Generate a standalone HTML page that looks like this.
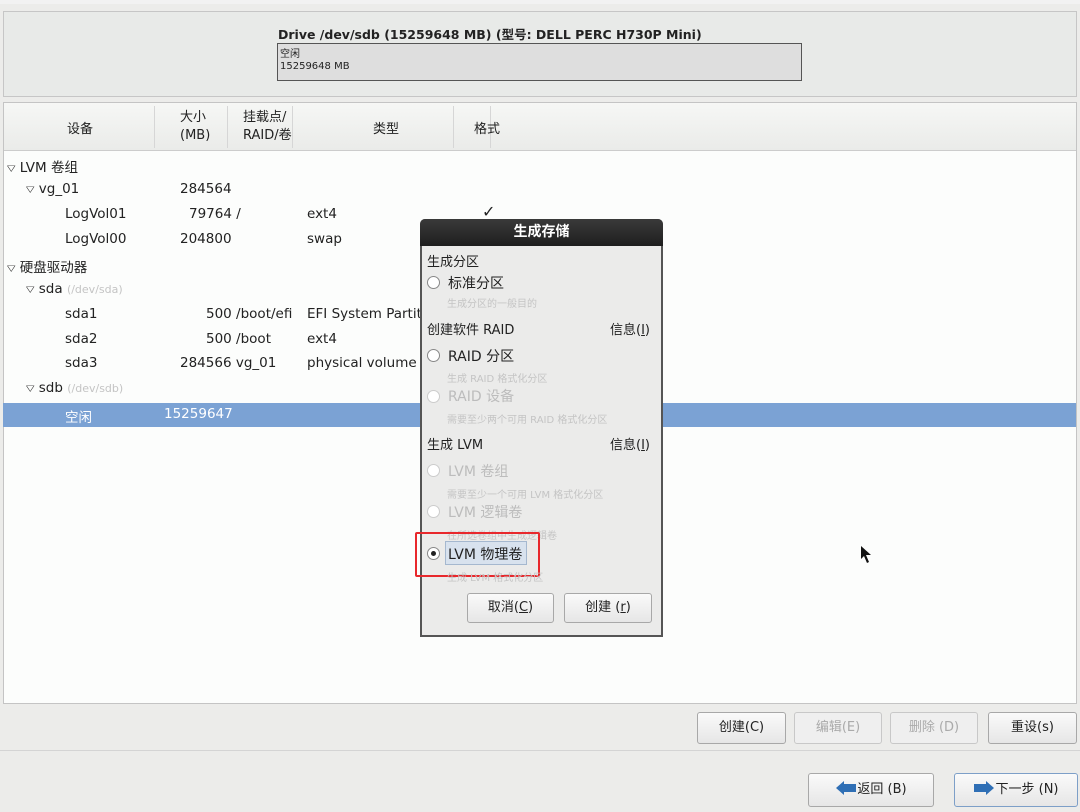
<!DOCTYPE html>
<html><head><meta charset="utf-8"><style>
*{margin:0;padding:0;box-sizing:border-box}
body{width:1080px;height:812px;background:#ececea;font-family:"DejaVu Sans","Noto Sans CJK SC",sans-serif;color:#222;position:relative;overflow:hidden;font-size:14px}
.a{position:absolute;white-space:nowrap}
.btn{position:absolute;border:1px solid #a8a8a8;border-radius:3px;background:linear-gradient(#fafafa,#e6e6e6);text-align:center;font-size:13px;line-height:30px;height:32px}
.dis{color:#aaa;border-color:#c8c8c8;background:#efefef}
.gr{color:#bcbcbc}
.rad{position:absolute;width:13px;height:13px;border:1px solid #888;border-radius:50%;background:#fff}
.rad.d{border-color:#ccc}
.sm{font-size:11px;color:#c4c4c4}
.t{font-size:11px;display:inline-block;transform:scaleY(0.75)}
</style></head><body>
<div class="a" style="left:0;top:0;width:1080px;height:4px;background:#f2f2f2"></div>
<div class="a" style="left:3px;top:11px;width:1074px;height:86px;border:1px solid #c6c6c6;background:#e8eae8"></div>
<div class="a" style="left:278px;top:24px;font-weight:bold;font-size:12.5px">Drive /dev/sdb (15259648 MB) (型号: DELL PERC H730P Mini)</div>
<div class="a" style="left:277px;top:43px;width:525px;height:38px;border:1px solid #555;background:#dedede;font-size:10px;line-height:12px;padding:5px 0 0 2px">空闲<br>15259648 MB</div>

<div class="a" style="left:3px;top:102px;width:1074px;height:602px;border:1px solid #c4c4c4;background:#fcfdfc"></div>
<div class="a" style="left:4px;top:103px;width:1072px;height:48px;background:linear-gradient(#f6f7f5,#eaebe9);border-bottom:1px solid #ccc"></div>
<div class="a" style="left:154px;top:106px;width:1px;height:42px;background:#d6d6d6"></div>
<div class="a" style="left:227px;top:106px;width:1px;height:42px;background:#d6d6d6"></div>
<div class="a" style="left:292px;top:106px;width:1px;height:42px;background:#d6d6d6"></div>
<div class="a" style="left:453px;top:106px;width:1px;height:42px;background:#d6d6d6"></div>
<div class="a" style="left:490px;top:106px;width:1px;height:42px;background:#d6d6d6"></div>
<div class="a" style="left:67px;top:118px;font-size:13px">设备</div>
<div class="a" style="left:180px;top:109px;font-size:13px;line-height:18px">大小<br>(MB)</div>
<div class="a" style="left:243px;top:109px;font-size:13px;line-height:18px">挂载点/<br>RAID/卷</div>
<div class="a" style="left:373px;top:118px;font-size:13px">类型</div>
<div class="a" style="left:474px;top:118px;font-size:13px">格式</div>

<div class="a" style="left:3px;top:403px;width:1073px;height:24px;background:#7ba2d4"></div>
<div style="font-size:13.5px">
<div class="a" style="left:7px;top:156px"><span class="t">▽</span> LVM 卷组</div>
<div class="a" style="left:26px;top:181px"><span class="t">▽</span> vg_01</div><div class="a" style="left:180px;top:181px">284564</div>
<div class="a" style="left:65px;top:206px">LogVol01</div><div class="a" style="left:189px;top:206px">79764 /</div><div class="a" style="left:307px;top:206px">ext4</div>
<div class="a" style="left:482px;top:202px;font-size:16px">✓</div>
<div class="a" style="left:65px;top:231px">LogVol00</div><div class="a" style="left:180px;top:231px">204800</div><div class="a" style="left:307px;top:231px">swap</div>
<div class="a" style="left:7px;top:256px"><span class="t">▽</span> 硬盘驱动器</div>
<div class="a" style="left:26px;top:281px"><span class="t">▽</span> sda <span class="sm">(/dev/sda)</span></div>
<div class="a" style="left:65px;top:306px">sda1</div><div class="a" style="left:206px;top:306px">500 /boot/efi</div><div class="a" style="left:307px;top:306px">EFI System Partition</div>
<div class="a" style="left:65px;top:331px">sda2</div><div class="a" style="left:206px;top:331px">500 /boot</div><div class="a" style="left:307px;top:331px">ext4</div>
<div class="a" style="left:65px;top:355px">sda3</div><div class="a" style="left:180px;top:355px">284566 vg_01</div><div class="a" style="left:307px;top:355px">physical volume</div>
<div class="a" style="left:26px;top:380px"><span class="t">▽</span> sdb <span class="sm">(/dev/sdb)</span></div>
<div class="a" style="left:65px;top:406px;color:#fff">空闲</div><div class="a" style="left:164px;top:406px;color:#fff">15259647</div>
</div>

<!-- dialog -->
<div class="a" style="left:420px;top:219px;width:243px;height:418px;background:#555;border-radius:5px 5px 0 0"></div>
<div class="a" style="left:420px;top:219px;width:243px;height:27px;background:linear-gradient(#3a3a3a,#1e1e1e);border-radius:5px 5px 0 0;color:#fff;font-weight:bold;text-align:center;line-height:27px;font-size:14px">生成存储</div>
<div class="a" style="left:422px;top:246px;width:239px;height:389px;background:#ebebea"></div>
<div style="font-size:13px">
<div class="a" style="left:427px;top:251px">生成分区</div>
<div class="rad" style="left:427px;top:276px"></div><div class="a" style="left:448px;top:273px;font-size:14px">标准分区</div>
<div class="a sm" style="left:447px;top:295px;font-size:10px">生成分区的一般目的</div>
<div class="a" style="left:427px;top:319px">创建软件 RAID</div><div class="a" style="left:610px;top:319px">信息(<u>I</u>)</div>
<div class="rad" style="left:427px;top:349px"></div><div class="a" style="left:448px;top:346px;font-size:14px">RAID 分区</div>
<div class="a sm" style="left:447px;top:370px;font-size:10px">生成 RAID 格式化分区</div>
<div class="rad d" style="left:427px;top:390px"></div><div class="a gr" style="left:448px;top:386px;font-size:14px">RAID 设备</div>
<div class="a sm" style="left:447px;top:411px;font-size:10px">需要至少两个可用 RAID 格式化分区</div>
<div class="a" style="left:427px;top:434px">生成 LVM</div><div class="a" style="left:610px;top:434px">信息(<u>I</u>)</div>
<div class="rad d" style="left:427px;top:464px"></div><div class="a gr" style="left:448px;top:461px;font-size:14px">LVM 卷组</div>
<div class="a sm" style="left:447px;top:486px;font-size:10px">需要至少一个可用 LVM 格式化分区</div>
<div class="rad d" style="left:427px;top:505px"></div><div class="a gr" style="left:448px;top:502px;font-size:14px">LVM 逻辑卷</div>
<div class="a sm" style="left:447px;top:527px;font-size:10px">在所选卷组中生成逻辑卷</div>
<div class="a" style="left:415px;top:532px;width:125px;height:45px;border:2px solid #e8282c;border-radius:2px"></div>
<div class="rad" style="left:427px;top:547px"></div><div class="a" style="left:431px;top:551px;width:5px;height:5px;border-radius:50%;background:#222"></div>
<div class="a" style="left:445px;top:541px;width:82px;height:24px;border:1px solid #a5b8cf;background:#d8e2ee"></div>
<div class="a" style="left:448px;top:544px;font-size:14px">LVM 物理卷</div>
<div class="a sm" style="left:447px;top:569px;font-size:10px">生成 LVM 格式化分区</div>
</div>
<div class="btn" style="left:467px;top:593px;width:87px;height:30px;line-height:28px">取消(<u>C</u>)</div>
<div class="btn" style="left:564px;top:593px;width:88px;height:30px;line-height:28px">创建 (<u>r</u>)</div>

<svg class="a" style="left:860px;top:545px" width="14" height="20"><path d="M1 1 L1 14 L4 11 L7 18 L9 17 L6 10 L11 10 Z" fill="#111"/></svg>

<div class="btn" style="left:697px;top:712px;width:89px">创建(C)</div>
<div class="btn dis" style="left:794px;top:712px;width:88px">编辑(E)</div>
<div class="btn dis" style="left:890px;top:712px;width:88px">删除 (D)</div>
<div class="btn" style="left:988px;top:712px;width:89px">重设(s)</div>
<div class="a" style="left:0;top:750px;width:1080px;height:1px;background:#d4d4d4"></div>
<div class="btn" style="left:808px;top:773px;width:126px;height:34px;line-height:32px"><svg width="22" height="16" style="vertical-align:-3px"><path d="M1 8 L9 1 L9 4 L21 4 L21 12 L9 12 L9 15 Z" fill="#2f6fb5"/></svg>返回 (B)</div>
<div class="btn" style="left:954px;top:773px;width:124px;height:34px;line-height:32px;border-color:#7d9fc8"><svg width="22" height="16" style="vertical-align:-3px"><path d="M21 8 L13 1 L13 4 L1 4 L1 12 L13 12 L13 15 Z" fill="#2f6fb5"/></svg>下一步 (N)</div>
</body></html>
